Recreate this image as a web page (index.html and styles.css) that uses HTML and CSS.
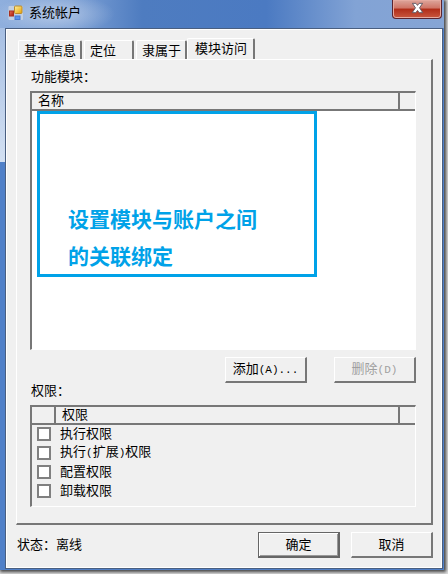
FILE: index.html
```
<!DOCTYPE html>
<html lang="zh">

<head>
    <meta charset="UTF-8">
    <meta name="viewport" content="width=device-width, initial-scale=1.0">
    <title>系统帐户</title>
    <link rel="stylesheet" href="styles.css">
</head>

<body>
    <div class="window">
        <header class="titlebar">
            <svg class="appicon" viewBox="0 0 16 16" aria-hidden="true">
                <defs>
                    <linearGradient id="gold" x2="1" y2="1">
                        <stop offset="0" stop-color="#fff2a0" />
                        <stop offset="1" stop-color="#e8a000" />
                    </linearGradient>
                    <linearGradient id="red" x2="1" y2="1">
                        <stop offset="0" stop-color="#e87058" />
                        <stop offset="1" stop-color="#a81808" />
                    </linearGradient>
                </defs>
                <rect x="0.5" y="1" width="14.5" height="14" rx="1" fill="#c3cfe2" />
                <rect x="6.5" y="1" width="7.5" height="7.5" rx="1" fill="url(#gold)" stroke="#b88a30" />
                <rect x="1.5" y="6" width="4" height="5" fill="url(#red)" stroke="#a83020" />
                <rect x="7" y="11" width="5" height="3.500" fill="#5b92ec" stroke="#4478d0" />
            </svg>
            <h1 class="title">系统帐户</h1>
            <button class="close" type="button" aria-label="关闭">
                <svg viewBox="0 0 14 12" aria-hidden="true">
                    <path d="M1.500 1h3.800L7 3.200 8.700 1h3.800L9.200 5.800l3.500 5.200H8.800L7 8.600 5.200 11H1.300l3.500-5.200z" fill="#fff" stroke="#5c5560" />
                </svg>
            </button>
        </header>

        <main class="client">
            <div class="tabs" role="tablist">
                <button class="tab" type="button" role="tab">基本信息</button>
                <button class="tab" type="button" role="tab">定位</button>
                <button class="tab" type="button" role="tab">隶属于</button>
                <button class="tab active" type="button" role="tab" aria-selected="true">模块访问</button>
            </div>

            <section class="panel" role="tabpanel">
                <h2 class="label">功能模块：</h2>
                <div class="list modules">
                    <table>
                        <thead>
                            <tr>
                                <th>名称</th>
                                <th class="end"></th>
                            </tr>
                        </thead>
                    </table>
                    <p class="note">设置模块与账户之间的关联绑定</p>
                </div>

                <div class="actions">
                    <button class="btn" type="button">添加<span class="half">(A)...</span></button>
                    <button class="btn" type="button" disabled>删除<span class="half">(D)</span></button>
                </div>

                <h2 class="label">权限：</h2>
                <div class="list rights">
                    <table>
                        <thead>
                            <tr>
                                <th class="check"></th>
                                <th>权限</th>
                                <th class="end"></th>
                            </tr>
                        </thead>
                        <tbody>
                            <tr>
                                <td><input type="checkbox" id="run"></td>
                                <td colspan="2"><label for="run">执行权限</label></td>
                            </tr>
                            <tr>
                                <td><input type="checkbox" id="runExt"></td>
                                <td colspan="2"><label for="runExt">执行<span class="half">(</span>扩展<span class="half">)</span>权限</label></td>
                            </tr>
                            <tr>
                                <td><input type="checkbox" id="config"></td>
                                <td colspan="2"><label for="config">配置权限</label></td>
                            </tr>
                            <tr>
                                <td><input type="checkbox" id="unload"></td>
                                <td colspan="2"><label for="unload">卸载权限</label></td>
                            </tr>
                        </tbody>
                    </table>
                </div>
            </section>

            <footer class="bottom">
                <p class="status">状态：离线</p>
                <button class="btn default" type="button">确定</button>
                <button class="btn" type="button">取消</button>
            </footer>
        </main>
    </div>
</body>

</html>
```

FILE: styles.css
```
* {
    box-sizing: border-box;
}

body {
    margin: 0;
    min-height: 100vh;
    display: flex;
    padding: 0 4px 4px 0;
    background: #ddd;
    font-family: "Liberation Sans", "Noto Sans CJK SC", sans-serif;
    font-size: 13px;
    line-height: 18px;
    color: #000;
}

h1,
h2,
p {
    margin: 0;
    font-size: 13px;
    font-weight: normal;
}

button {
    font: inherit;
    color: inherit;
}

/* 窗口边框 */
.window {
    flex: 1;
    display: flex;
    flex-direction: column;
    padding: 0 1px 1px 5px;
    background:
        linear-gradient(#9db8e0, #d3e0f2) 0 0 / 5px 162px no-repeat,
        #5080c8;
    box-shadow: 1px 1px 3px 1px #444;
}

.titlebar {
    display: flex;
    align-items: flex-start;
    height: 28px;
    margin: 0 -1px 0 -5px;
    padding: 0 2px 0 8px;
    background:
        radial-gradient(60px 20px at 55px 14px, rgba(200, 214, 236, 0.7), transparent),
        linear-gradient(90deg, #8fafdd, #7fa2d6 16%, #4e7cc0 32%, #4b7ac2 60%, #82a3d5 80%, #86a5d5);
}

.appicon {
    width: 16px;
    height: 16px;
    margin-top: 5px;
}

.title {
    flex: 1;
    padding: 4px 0 0 5px;
}

.close {
    width: 50px;
    height: 19px;
    padding: 0;
    border: 1px solid #5a2430;
    border-top: 0;
    border-radius: 0 0 4px 4px;
    background: linear-gradient(#dda69c, #cf7466 45%, #b02c18 50%, #c9573f);
    box-shadow: inset 0 0 0 1px #e5aaa0;
}

.close svg {
    display: block;
    width: 13px;
    height: 12px;
    margin: 0 auto 2px;
}

.client {
    flex: 1;
    display: flex;
    flex-direction: column;
    padding: 9px 9px 10px 10px;
    border: 1px solid #4a5f80;
    box-shadow: inset 0 0 0 1px #fff;
    background: #f0f0f0;
}

/* 选项卡 */
.tabs {
    display: flex;
    align-items: flex-end;
    gap: 2px;
    padding-left: 2px;
}

.tab {
    min-width: 50px;
    height: 19px;
    padding: 2px 4px 0 5px;
    border: 1px solid #fff;
    border-right: 2px solid #777;
    border-bottom: 0;
    border-radius: 2px 2px 0 0;
    line-height: 16px;
    text-align: left;
    background: #f0f0f0;
}

.active {
    height: 22px;
    margin: 0 0 -1px -2px;
    padding: 0 6px 2px 7px;
}

.panel {
    flex: 1;
    display: flex;
    flex-direction: column;
    padding: 9px 15px 16px 13px;
    border: 1px solid #fff;
    border-right: 2px solid #777;
    border-bottom: 2px solid #777;
}

.label {
    padding: 0 1px;
    line-height: 16px;
}

/* 列表 */
.list {
    margin-top: 6px;
    border: 1px solid #fff;
    border-top: 2px solid #777;
    border-left: 2px solid #777;
}

.list table {
    width: 100%;
    border-collapse: collapse;
    table-layout: fixed;
}

.list th {
    height: 17px;
    padding: 0 6px;
    border-right: 2px solid #777;
    border-bottom: 2px solid #777;
    line-height: 16px;
    font-weight: normal;
    text-align: left;
    background: #f0f0f0;
}

.list th.end {
    width: 16px;
    padding: 0;
    border-right: 0;
}

.list th.check {
    width: 23px;
    padding: 0;
}

.list td {
    height: 19px;
    padding: 0 5px;
    line-height: 18px;
}

.list input {
    display: block;
    appearance: none;
    width: 14px;
    height: 14px;
    margin: 0;
    border: 2px solid #808080;
    background: #fff;
}

.modules {
    flex: 1;
    background: #fff;
}

.rights {
    padding-bottom: 6px;
}

.note {
    width: 280px;
    max-width: 100%;
    height: 166px;
    margin-left: 5px;
    padding: 87px 40px 0 28px;
    border: 3px solid #00a2e8;
    font-size: 21px;
    font-weight: bold;
    line-height: 37px;
    color: #00a2e8;
}

.half {
    font-family: "Liberation Mono", monospace;
    font-size: 11px;
}

/* 按钮 */
.btn {
    width: 82px;
    height: 26px;
    padding: 0;
    border: 1px solid #fff;
    border-right: 2px solid #777;
    border-bottom: 2px solid #777;
    background: #f0f0f0;
}

.btn:disabled {
    color: #a0a0a0;
}

.default {
    border: 1px solid #666;
    border-right-width: 2px;
    border-bottom-width: 2px;
    box-shadow: inset 1px 1px 0 #fff, inset -1px -1px 0 #999;
}

.actions {
    display: flex;
    justify-content: flex-end;
    gap: 27px;
    padding-top: 7px;
}

.bottom {
    display: flex;
    align-items: center;
    gap: 11px;
    padding-top: 7px;
}

.status {
    flex: 1;
    padding-left: 1px;
}
```
